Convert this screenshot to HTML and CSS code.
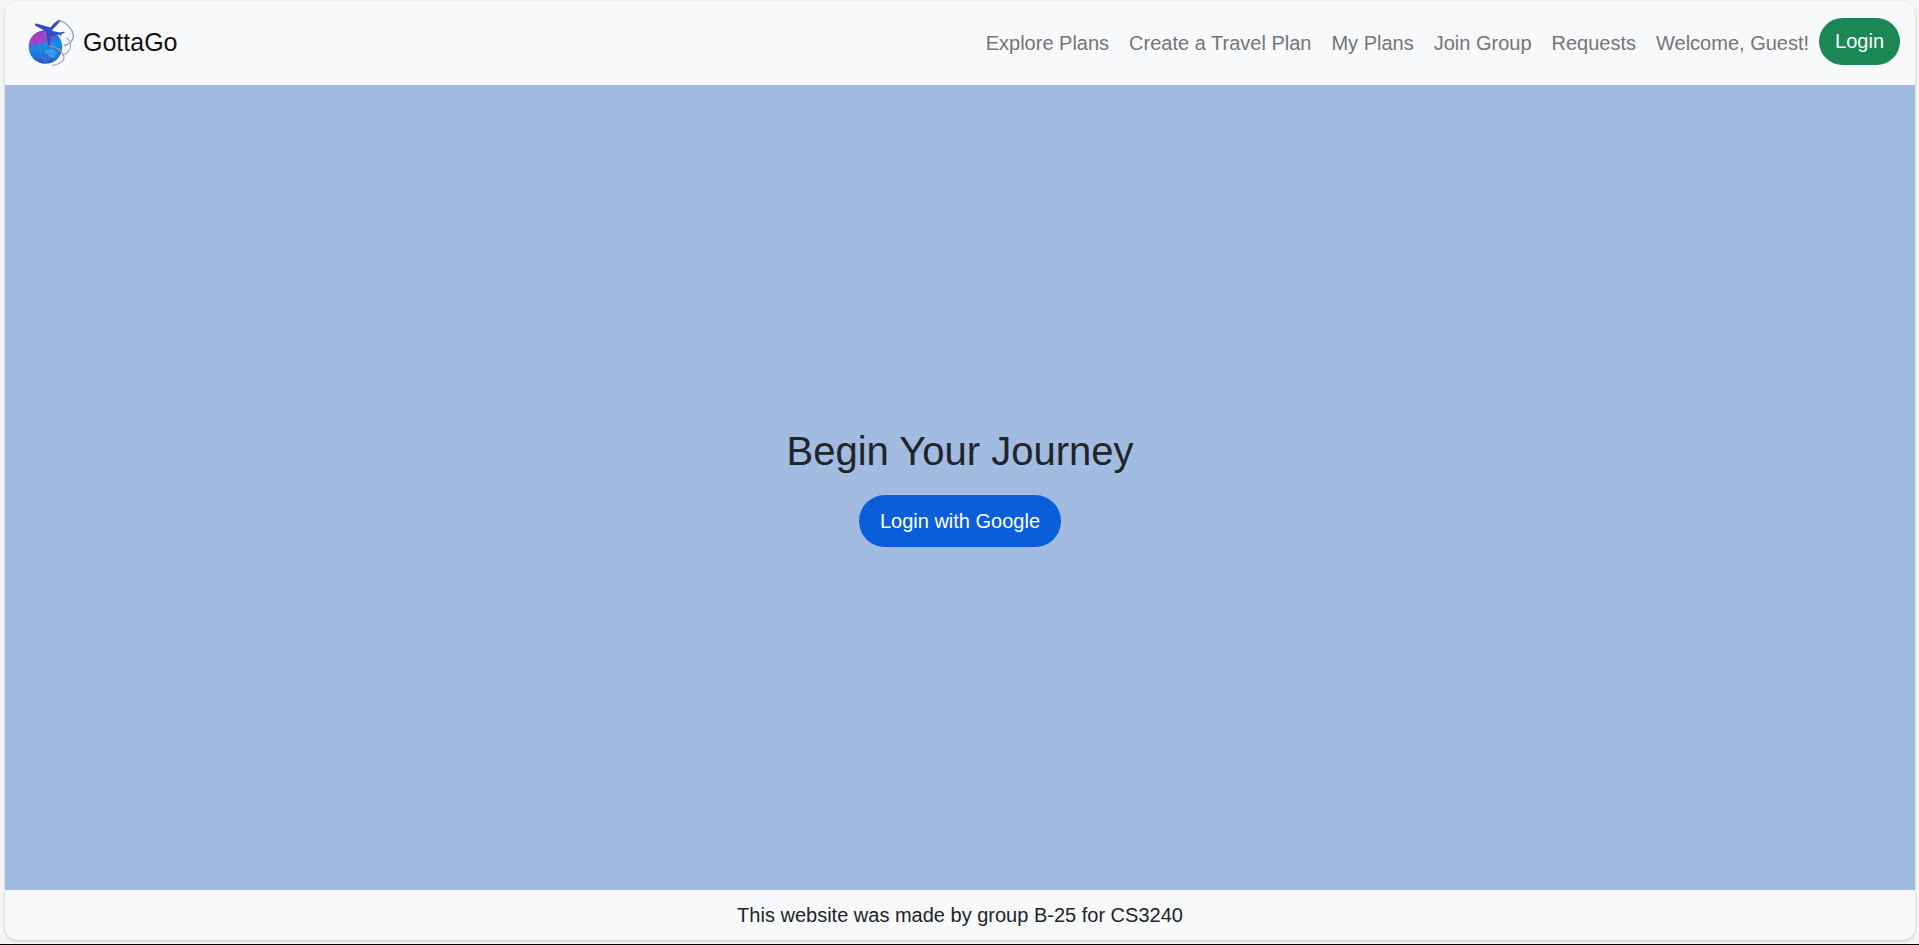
FILE: index.html
```html
<!DOCTYPE html>
<html lang="en">
<head>
<meta charset="utf-8">
<meta name="viewport" content="width=device-width, initial-scale=1">
<title>GottaGo</title>
<link rel="stylesheet" href="styles.css">
</head>
<body>
<div class="card">
  <header class="navbar">
    <a class="brand" href="#">
      <svg class="brand-logo" viewBox="0 0 50 50" aria-hidden="true">
        <defs>
          <linearGradient id="sea" x1="0" y1="0" x2="0" y2="1">
            <stop offset="0" stop-color="#2b62d8"/>
            <stop offset="0.4" stop-color="#128fe2"/>
            <stop offset="0.7" stop-color="#1c7cdb"/>
            <stop offset="1" stop-color="#2850c4"/>
          </linearGradient>
          <clipPath id="disc"><circle cx="20.500" cy="29" r="16.800"/></clipPath>
        </defs>
        <circle cx="20.500" cy="29" r="16.800" fill="url(#sea)"/>
        <g clip-path="url(#disc)">
          <path d="M3 27L5 19L11 14L27 13L29 19L26 23L24 22L22 25L18 23L16 28L13 25L10 27L7 26L5 28Z" fill="#a43fc4"/>
          <path d="M20 33L27 31L32 34L29 40L25 39Z" fill="#489ee6" opacity="0.800"/>
          <path d="M4 30Q20 36 37 30M6 38Q20 43 35 37M20.500 13Q8 29 20.500 46M20.500 13V46M20.500 13Q33 29 20.500 46" fill="none" stroke="#6aa6ec" stroke-width="0.500" opacity="0.500"/>
        </g>
        <g fill="none" stroke-width="1.100" stroke-linecap="round">
          <path d="M35 2.500C42 5 49 13 48.300 18.500C48 23 45 26 39 27.500" stroke="#8488cc"/>
          <path d="M42 20C46 24 46.500 29 43.500 33C42 35.500 40 36.500 37.500 37" stroke="#a99bce"/>
          <path d="M24.500 28C31 29 36 32 38 36C40.500 41 38 44 34 45.500C32 46.500 30 47 27.500 47.500" stroke="#b694bf"/>
        </g>
        <circle cx="24.300" cy="28" r="0.900" fill="#db4b8c"/>
        <path d="M35 2C33 1.500 29 5 25.500 9.500L11.500 5.500C9.500 5.500 9.500 7.500 11 8L21 13.500L21.500 19L23.500 27.500H24.800L26.500 18.500L34 16.500L36 18.500L36.500 16L40 14.500C39.500 13 37 14 35 14.500L27.500 13L27.500 11.500C31 8 35.500 4 35 2Z" fill="#2f50bd"/>
      </svg>
      <span>GottaGo</span>
    </a>
    <nav class="links">
      <a class="link" href="#">Explore Plans</a>
      <a class="link" href="#">Create a Travel Plan</a>
      <a class="link" href="#">My Plans</a>
      <a class="link" href="#">Join Group</a>
      <a class="link" href="#">Requests</a>
      <span class="link">Welcome, Guest!</span>
      <button class="btn btn-login" type="button">Login</button>
    </nav>
  </header>
  <main class="hero">
    <h1 class="title">Begin Your Journey</h1>
    <button class="btn btn-google" type="button">Login with Google</button>
  </main>
  <footer class="footer">This website was made by group B-25 for CS3240</footer>
</div>
</body>
</html>
```
FILE: styles.css
```css
* {
  box-sizing: border-box;
}

body {
  margin: 0;
  min-height: 100vh;
  display: flex;
  flex-direction: column;
  padding: 1px 4px 4px 5px;
  border-bottom: 1px solid #000;
  background: #f5f5f5;
  color: #212529;
  font-family: "Liberation Sans", Arial, sans-serif;
  font-size: 20px;
  line-height: 30px;
}

.card {
  flex: 1;
  display: flex;
  flex-direction: column;
  overflow: hidden;
  border-radius: 12px;
  background: #f8f9fb;
  box-shadow: 0 1px 3px rgba(0, 0, 0, 0.2);
}

.navbar {
  display: flex;
  align-items: flex-start;
  justify-content: space-between;
  padding: 17px 15px 17px 20px;
}

.brand {
  display: flex;
  align-items: center;
  gap: 8px;
  color: #111;
  font-size: 25px;
  line-height: 48px;
  text-decoration: none;
}

.brand-logo {
  width: 50px;
  height: 50px;
}

.brand span {
  padding-bottom: 2px;
}

.links {
  display: flex;
  align-items: center;
}

.link {
  padding: 10px;
  color: #747678;
  text-decoration: none;
}

.btn {
  border: 0;
  color: #fff;
  font: inherit;
  cursor: pointer;
}

.btn-login {
  align-self: flex-start;
  padding: 8px 16px 9px;
  border-radius: 24px;
  background: #1a8754;
}

.hero {
  flex: 1;
  display: flex;
  flex-direction: column;
  align-items: center;
  justify-content: center;
  gap: 20px;
  padding-bottom: 2px;
  background: #a2bbe0;
}

.title {
  margin: 0;
  font-size: 40px;
  font-weight: 400;
  line-height: 48px;
}

.btn-google {
  padding: 11px 21px;
  border-radius: 26px;
  background: #0b5ed9;
}

.footer {
  padding: 10px;
  text-align: center;
}
```
